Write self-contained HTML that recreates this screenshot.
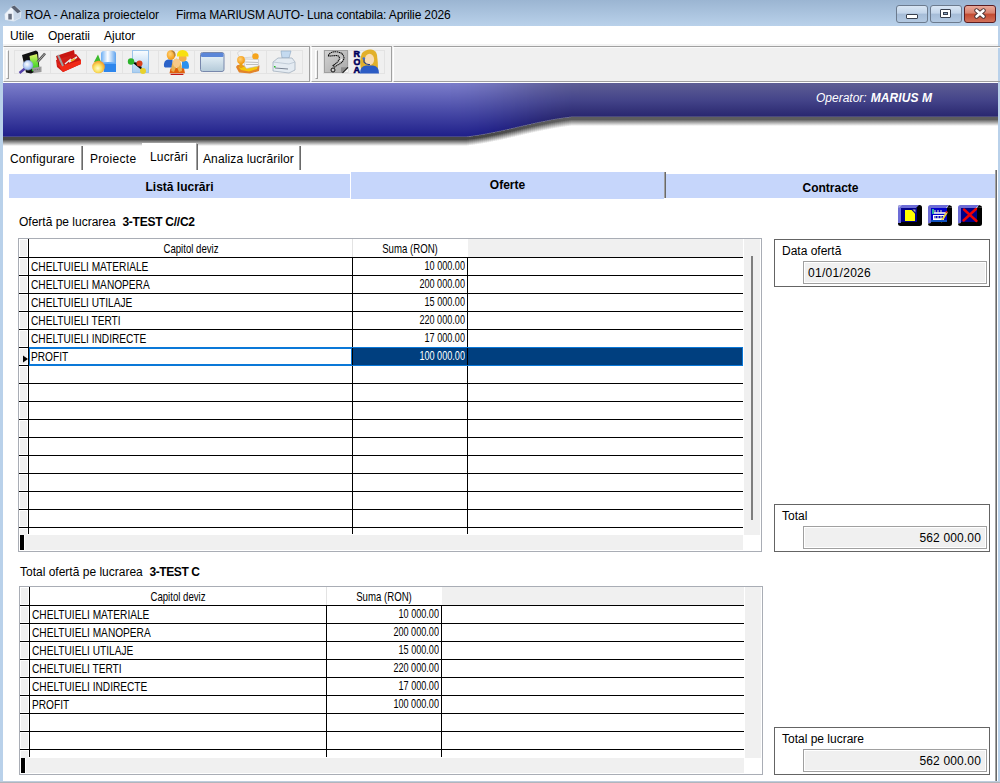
<!DOCTYPE html>
<html><head><meta charset="utf-8">
<style>
*{margin:0;padding:0;box-sizing:border-box}
html,body{width:1000px;height:783px;overflow:hidden;background:#fff;font-family:"Liberation Sans",sans-serif;color:#000}
.a{position:absolute}
.t{position:absolute;white-space:nowrap;line-height:1}
.wbtn{position:absolute;top:5px;height:18px;border:1px solid #6c7b8e;border-radius:3px;background:linear-gradient(#d9e6f4 0%,#c3d5ea 45%,#a5bcd7 50%,#b3c9e2 100%)}
.wbtn.cl{border-color:#5b1e22;background:linear-gradient(#e9a99a 0%,#d8826e 45%,#c24a30 50%,#d2715a 100%)}
.grp{position:absolute;top:46px;height:36px;border-top:1px solid #a0a0a0;border-bottom:1px solid #a0a0a0;border-left:1px solid #fff;border-right:1px solid #a0a0a0;box-shadow:inset 0 1px 0 #fafafa}
.grip{position:absolute;width:3px;border-left:1px solid #fff;border-top:1px solid #fff;border-right:1px solid #a0a0a0;border-bottom:1px solid #a0a0a0}
.cell{position:absolute;top:50px;height:24px;border:1px solid #e3e3e3}
.tab{position:absolute;font-size:12px}
.sep{position:absolute;width:2px;border-left:1px solid #a0a0a0;border-right:1px solid #696969}
.st{position:absolute;background:#c6d6fb;font-weight:bold;font-size:12px;text-align:center}
.g{font-size:13px;transform-origin:0 0}
.gs{}
.box{position:absolute;border:1px solid #646464}
.fld{position:absolute;border:1px solid #a0a0a0;background:#f0f0f0;box-shadow:inset 1px 1px 0 #fff, inset -1px -1px 0 #fff}
</style></head><body>
<div class="a" style="left:0;top:0;width:1000px;height:26px;background:linear-gradient(#9bb5d2,#b9d1ea)"></div>
<div class="a" style="left:0;top:26px;width:3px;height:757px;background:#b9d1ea"></div>
<div class="a" style="left:998px;top:26px;width:2px;height:757px;background:#b9d1ea"></div>
<div class="a" style="left:0;top:781px;width:1000px;height:2px;background:linear-gradient(#c5d9f0,#a9a9a9)"></div>
<div class="wbtn" style="left:896px;width:32px"></div>
<div class="wbtn" style="left:930px;width:32px"></div>
<div class="wbtn cl" style="left:964px;width:32px"></div>
<div class="a" style="left:906px;top:14px;width:12px;height:5px;border:1px solid #38404e;border-radius:1px;background:#fff"></div>
<div class="a" style="left:940px;top:9px;width:11px;height:9px;border:1px solid #38404e;border-radius:1px;background:#fff"><div class="a" style="left:2px;top:2px;width:5px;height:3px;background:#8fa8c6;border:1px solid #38404e"></div></div>
<svg class="a" style="left:972px;top:8px" width="16" height="12" viewBox="0 0 16 12"><path d="M4.5 2.5 L11.5 8.5 M11.5 2.5 L4.5 8.5" stroke="#4a3434" stroke-width="4.4" stroke-linecap="round"/><path d="M4.5 2.5 L11.5 8.5 M11.5 2.5 L4.5 8.5" stroke="#fff" stroke-width="2.6" stroke-linecap="round"/></svg>
<svg class="a" style="left:4px;top:5px" width="18" height="17" viewBox="0 0 18 17"><path d="M0.5 9 L7.5 1.5 L10.5 0 L17.5 6.5 L16.8 13 L10 16.5 L1 15Z" fill="#fff" opacity=".55"/><path d="M1 9.5 L7.5 2.5 L9.5 4.5 L9.5 15.5 L1.5 14.5Z" fill="#eef3fa"/><rect x="4.3" y="8.8" width="3.5" height="5.7" fill="#687080"/><path d="M9.5 4.5 L13.5 8 L16 7 L16 12.5 L10 15.5Z" fill="#c9d7e8"/><path d="M7 2 L10.5 0.5 L16.8 6.5 L13.5 8.3Z" fill="#5a6272"/></svg>
<div class="t" style="left:25px;top:9px;font-size:12px">ROA - Analiza proiectelor</div>
<div class="t" style="left:176px;top:9px;font-size:12px;letter-spacing:-0.14px">Firma MARIUSM AUTO- Luna contabila: Aprilie 2026</div>
<div class="a" style="left:3px;top:26px;width:995px;height:20px;background:linear-gradient(#fff 18px,#f3f3f3 18px)"></div>
<div class="t" style="left:10px;top:30px;font-size:12px">Utile</div>
<div class="t" style="left:48px;top:30px;font-size:12px">Operatii</div>
<div class="t" style="left:104px;top:30px;font-size:12px">Ajutor</div>
<div class="a" style="left:3px;top:46px;width:995px;height:36px;background:#f0f0f0"></div>
<div class="grp" style="left:3px;width:307px"></div>
<div class="grp" style="left:311px;width:81px"></div>
<div class="grp" style="left:393px;width:610px"></div>
<div class="grip" style="left:6px;top:50px;height:29px"></div>
<div class="grip" style="left:315px;top:50px;height:29px"></div>
<div class="cell" style="left:14px;width:37px"></div>
<div class="cell" style="left:50px;width:37px"></div>
<div class="cell" style="left:86px;width:37px"></div>
<div class="cell" style="left:122px;width:37px"></div>
<div class="cell" style="left:158px;width:37px"></div>
<div class="cell" style="left:194px;width:37px"></div>
<div class="cell" style="left:230px;width:37px"></div>
<div class="cell" style="left:266px;width:37px"></div>
<div class="cell" style="left:323px;width:37px"></div>
<div class="cell" style="left:348px;width:37px"></div>
<svg class="a" style="left:0;top:46px" width="400" height="36" viewBox="0 46 400 36">
<defs>
<linearGradient id="ig1" x1="0" y1="0" x2="0" y2="1"><stop offset="0" stop-color="#e4f56a"/><stop offset=".5" stop-color="#6fe03a"/><stop offset="1" stop-color="#22c41a"/></linearGradient>
<radialGradient id="ig2" cx=".4" cy=".4" r=".6"><stop offset="0" stop-color="#fff"/><stop offset="1" stop-color="#8fb4f0"/></radialGradient>
<linearGradient id="ig3" x1="0" y1="0" x2="1" y2="1"><stop offset="0" stop-color="#e0241c"/><stop offset="1" stop-color="#b00c0c"/></linearGradient>
<linearGradient id="ig4" x1="0" y1="0" x2="1" y2="0"><stop offset="0" stop-color="#6aaef5"/><stop offset=".45" stop-color="#ffffff"/><stop offset="1" stop-color="#5da2ee"/></linearGradient>
<radialGradient id="ig5" cx=".45" cy=".6" r=".55"><stop offset="0" stop-color="#fffbd0"/><stop offset=".55" stop-color="#f8e060"/><stop offset="1" stop-color="#f5a030"/></radialGradient>
<linearGradient id="ig6" x1="0" y1="0" x2="0" y2="1"><stop offset="0" stop-color="#fafdff"/><stop offset="1" stop-color="#a8cdf0"/></linearGradient>
<linearGradient id="ig7" x1="0" y1="0" x2="0" y2="1"><stop offset="0" stop-color="#eef7fc"/><stop offset="1" stop-color="#b4cad9"/></linearGradient>
<radialGradient id="ig8" cx=".4" cy=".4" r=".6"><stop offset="0" stop-color="#ffd27a"/><stop offset="1" stop-color="#f59a10"/></radialGradient>
<linearGradient id="ig9" x1="0" y1="0" x2="1" y2="1"><stop offset="0" stop-color="#d4d4d4"/><stop offset="1" stop-color="#a8a8a8"/></linearGradient>
<linearGradient id="ig10" x1="0" y1="0" x2="0" y2="1"><stop offset="0" stop-color="#f4c860"/><stop offset="1" stop-color="#c88a18"/></linearGradient>
</defs>
<!-- icon1 -->
<path d="M22 55 L36 50.5 L38 52 L39.5 70 L31 73.5 L26 72.5Z" fill="#111"/>
<path d="M29.5 56 L37 54 L39 69 L32 71.5Z" fill="url(#ig1)"/>
<path d="M32 68 L41.5 66.5 L41.5 72 L34 73Z" fill="#9c9c9c"/>
<path d="M33.5 70 L40.5 69" stroke="#6a6a6a" stroke-width=".8" stroke-dasharray="1 .8"/>
<path d="M37.5 62 L45 53.5" stroke="#505050" stroke-width="2.6"/>
<path d="M37.5 62 L45 53.5" stroke="#a8a8a8" stroke-width="1"/>
<path d="M25.5 68 L19.5 73" stroke="#5440a8" stroke-width="2.4"/>
<circle cx="28" cy="65.2" r="4.8" fill="url(#ig2)" stroke="#90a8d8" stroke-width=".8"/>
<!-- icon2 toolbox -->
<path d="M56 56 L74 50 L75 56 L58 63Z" fill="#c81410"/>
<path d="M56 60 L76 54 L81 60 L81 64 L63 72 L57 67Z" fill="url(#ig3)"/>
<path d="M57 63 L63 72 L81 64 L81 60 L62 66Z" fill="#f02a18"/>
<path d="M58 55 L63 66" stroke="#a0a0a0" stroke-width="2"/>
<path d="M65 64 L71 59 M69 62 L77 57" stroke="#e8e8e8" stroke-width="1.5"/>
<path d="M71 61 L75 59" stroke="#f0b020" stroke-width="1.8"/>
<!-- icon3 shapes -->
<rect x="101" y="51" width="15" height="21" rx="3" fill="url(#ig4)"/>
<rect x="104" y="63" width="12" height="9" fill="#2e86ec"/>
<path d="M101 63 Q108 61 116 63 L116 64 L101 64Z" fill="#5ea8f8"/>
<path d="M94 62 L98 54.5 L101 62Z" fill="#3cba2c"/>
<circle cx="98.5" cy="67" r="6.3" fill="url(#ig5)"/>
<!-- icon4 molecule doc -->
<rect x="132.5" y="50.5" width="16" height="22" fill="url(#ig6)" stroke="#9cc4ea" stroke-width="1"/>
<path d="M131 61.5 L139.5 63.5 L143 71" stroke="#505050" stroke-width="1"/>
<circle cx="131" cy="61.5" r="3.2" fill="#2cb42c"/>
<circle cx="139.5" cy="63.6" r="3" fill="#d8401c"/>
<circle cx="143" cy="71" r="3" fill="#e8d22c"/>
<!-- icon5 people -->
<path d="M164 66.5 Q163.5 60 168 59.5 L172.5 59.5 L172.5 67.5 L165 67.5Z" fill="#2a62c8"/>
<path d="M182 61 L186.5 61 Q189 62 189 67 L188.5 68.8 L182 68.8Z" fill="#2a90ee"/>
<ellipse cx="171" cy="55" rx="4.3" ry="4.8" fill="url(#ig8)"/>
<path d="M172 50.5 Q176 51 175.5 56 L174.5 57 Q174 52 171 51Z" fill="#b08040"/>
<ellipse cx="182.7" cy="58" rx="3.9" ry="3.8" fill="#f4b048"/>
<path d="M177 56.5 Q176.5 50 182.5 50 Q188.5 50 188.5 56.5Z" fill="#f8e010"/>
<path d="M169.5 73.2 L170.5 68.5 Q176 67 184 68.5 L185 73.2Z" fill="#e0600c"/>
<path d="M171.3 71 Q171 60 176.5 58.5 Q182 60 182 71 L179 72 L176.5 66 L174 72Z" fill="#e8b050"/>
<ellipse cx="176.6" cy="63" rx="3.6" ry="4.2" fill="#f8c888"/>
<path d="M170.6 74.4 L183.4 74.4" stroke="#c01818" stroke-width="1.2"/>
<!-- icon6 window -->
<rect x="200.5" y="52.5" width="23.5" height="19" rx="2" fill="url(#ig7)" stroke="#7888ac" stroke-width="1"/>
<rect x="201" y="53" width="22.5" height="4" rx="1" fill="#5b86d8"/>
<!-- icon7 papers -->
<path d="M237.5 53 Q239 50 245 50.5 Q251 49.5 252.5 52 L253 57 L241 58 Q238 56 237.5 53Z" fill="#f2f2f2" stroke="#c8c8c8" stroke-width=".6"/>
<circle cx="255.5" cy="56.5" r="3.2" fill="#f6a41c"/>
<path d="M236 67 Q237 64 241 65 L247 66 L259.5 65.5 L259 71 L250 73.5 L239 72.5Z" fill="#e2842a"/>
<path d="M238.5 67 L247 66.5 L258 65.5 L257 69 L249 71.5 L241 70Z" fill="#f6c80a"/>
<path d="M245 59 L258.5 59.5 L258.5 66 L246.5 68.5 L244.5 66Z" fill="#f6f6f6" stroke="#bcbcbc" stroke-width=".6"/>
<path d="M245.5 62 L258 62.5 M246 64.5 L258 64.5" stroke="#a8a8a8" stroke-width=".7"/>
<rect x="239.5" y="63" width="3" height="5" fill="#e8a010"/>
<circle cx="241" cy="60" r="3.9" fill="url(#ig8)"/>
<!-- icon8 printer -->
<path d="M281 51 L291 51 L289 58 L282 58Z" fill="#c4daf0" stroke="#8aa4c0" stroke-width=".6"/>
<path d="M273 62 L278 58 L292 58 L295 62 L295 70 L289 73 L273 71Z" fill="#e4ebf2" stroke="#9aa8b8" stroke-width=".7"/>
<path d="M273 62 L289 64 L295 62" stroke="#b8c4d0" stroke-width=".8" fill="none"/>
<path d="M275 68 L288 69" stroke="#7a8494" stroke-width="1"/>
<rect x="274" y="66" width="1.5" height="1.5" fill="#20c020"/>
<!-- help icon -->
<rect x="324" y="50" width="24" height="23" fill="url(#ig9)"/>
<rect x="324.5" y="50.5" width="23" height="22" fill="none" stroke="#a0a0a0" stroke-width="1"/>
<path d="M328.5 55.5 Q329.5 51.5 336.5 51.8 Q343.5 52.5 344 58 Q343.5 62 338.5 64.5 L334.5 67 L333 65.5 Q338.5 62 339.5 58.5 Q339.5 55.5 336 55.5 Q331.5 56 328.5 56Z" fill="#c4c4c4" stroke="#0a0a0a" stroke-width="1.1" stroke-dasharray="1.4 .5"/>
<path d="M340.5 61 L342 59" stroke="#fff" stroke-width="1.2"/>
<circle cx="333" cy="70" r="2" fill="#cfcfcf" stroke="#111" stroke-width="1"/>
<path d="M341 67.3 L348 67.3 L348 72.8 L341 72.8Z" fill="#8c8c8c"/>
<path d="M343 72.8 L348 67.8 L348 72.8Z" fill="#f4f4f4"/>
<path d="M342.5 72.8 L348 67.3" stroke="#1a1a1a" stroke-width="1.1"/>
<!-- ROA icon -->
<text x="353.6" y="57.3" font-family="Liberation Sans" font-weight="bold" font-size="9" fill="#00005c" stroke="#00005c" stroke-width=".6">R</text>
<text x="353.4" y="65.3" font-family="Liberation Sans" font-weight="bold" font-size="9" fill="#00005c" stroke="#00005c" stroke-width=".6">O</text>
<text x="353.6" y="73.3" font-family="Liberation Sans" font-weight="bold" font-size="9" fill="#00005c" stroke="#00005c" stroke-width=".6">A</text>
<path d="M361 70 Q359 60 362 53 Q366 49 371 49.5 Q376 50 377 55 Q378 62 378 69Z" fill="#e2b02a"/>
<ellipse cx="369.5" cy="59.5" rx="4.6" ry="5.8" fill="#f8dcb4"/>
<path d="M360 73.5 Q360 66 366 65.5 L373 65.5 Q379 66 379 73.5Z" fill="#2c5cc4"/>
<path d="M364 58 L364 62 Q366 65 370 64.5" stroke="#203c90" stroke-width="1.2" fill="none"/>
<circle cx="363.8" cy="58.5" r="1.3" fill="#3c70d8"/>
</svg>

<div class="a" style="left:3px;top:82px;width:995px;height:1px;background:#fff"></div>
<div class="a" style="left:3px;top:83px;width:995px;height:64px;overflow:hidden">
<i style="position:absolute;left:0px;top:0;width:8px;height:64px;background:linear-gradient(#7c7ecb,#4c4eaa 26.5px,#20208a 53.0px,#6c6c8c 54.0px,#474747 54.5px,#474747 56.5px,#fff 63.0px)"></i>
<i style="position:absolute;left:8px;top:0;width:8px;height:64px;background:linear-gradient(#7c7ecb,#4c4eaa 26.5px,#20208a 53.0px,#6c6c8c 54.0px,#474747 54.5px,#474747 56.5px,#fff 63.0px)"></i>
<i style="position:absolute;left:16px;top:0;width:8px;height:64px;background:linear-gradient(#7c7ecb,#4c4eaa 26.5px,#20208a 53.0px,#6c6c8c 54.0px,#474747 54.5px,#474747 56.5px,#fff 63.0px)"></i>
<i style="position:absolute;left:24px;top:0;width:8px;height:64px;background:linear-gradient(#7c7ecb,#4c4eaa 26.5px,#20208a 53.0px,#6c6c8c 54.0px,#474747 54.5px,#474747 56.5px,#fff 63.0px)"></i>
<i style="position:absolute;left:32px;top:0;width:8px;height:64px;background:linear-gradient(#7c7ecb,#4c4eaa 26.5px,#20208a 53.0px,#6c6c8c 54.0px,#474747 54.5px,#474747 56.5px,#fff 63.0px)"></i>
<i style="position:absolute;left:40px;top:0;width:8px;height:64px;background:linear-gradient(#7c7ecb,#4c4eaa 26.5px,#20208a 53.0px,#6c6c8c 54.0px,#474747 54.5px,#474747 56.5px,#fff 63.0px)"></i>
<i style="position:absolute;left:48px;top:0;width:8px;height:64px;background:linear-gradient(#7c7ecb,#4c4eaa 26.5px,#20208a 53.0px,#6c6c8c 54.0px,#474747 54.5px,#474747 56.5px,#fff 63.0px)"></i>
<i style="position:absolute;left:56px;top:0;width:8px;height:64px;background:linear-gradient(#7c7ecb,#4c4eaa 26.5px,#20208a 53.0px,#6c6c8c 54.0px,#474747 54.5px,#474747 56.5px,#fff 63.0px)"></i>
<i style="position:absolute;left:64px;top:0;width:8px;height:64px;background:linear-gradient(#7c7ecb,#4c4eaa 26.5px,#20208a 53.0px,#6c6c8c 54.0px,#474747 54.5px,#474747 56.5px,#fff 63.0px)"></i>
<i style="position:absolute;left:72px;top:0;width:8px;height:64px;background:linear-gradient(#7c7ecb,#4c4eaa 26.5px,#20208a 53.0px,#6c6c8c 54.0px,#474747 54.5px,#474747 56.5px,#fff 63.0px)"></i>
<i style="position:absolute;left:80px;top:0;width:8px;height:64px;background:linear-gradient(#7c7ecb,#4c4eaa 26.5px,#20208a 53.0px,#6c6c8c 54.0px,#474747 54.5px,#474747 56.5px,#fff 63.0px)"></i>
<i style="position:absolute;left:88px;top:0;width:8px;height:64px;background:linear-gradient(#7c7ecb,#4c4eaa 26.5px,#20208a 53.0px,#6c6c8c 54.0px,#474747 54.5px,#474747 56.5px,#fff 63.0px)"></i>
<i style="position:absolute;left:96px;top:0;width:8px;height:64px;background:linear-gradient(#7c7ecb,#4c4eaa 26.5px,#20208a 53.0px,#6c6c8c 54.0px,#474747 54.5px,#474747 56.5px,#fff 63.0px)"></i>
<i style="position:absolute;left:104px;top:0;width:8px;height:64px;background:linear-gradient(#7c7ecb,#4c4eaa 26.5px,#20208a 53.0px,#6c6c8c 54.0px,#474747 54.5px,#474747 56.5px,#fff 63.0px)"></i>
<i style="position:absolute;left:112px;top:0;width:8px;height:64px;background:linear-gradient(#7c7ecb,#4c4eaa 26.5px,#20208a 53.0px,#6c6c8c 54.0px,#474747 54.5px,#474747 56.5px,#fff 63.0px)"></i>
<i style="position:absolute;left:120px;top:0;width:8px;height:64px;background:linear-gradient(#7c7ecb,#4c4eaa 26.5px,#20208a 53.0px,#6c6c8c 54.0px,#474747 54.5px,#474747 56.5px,#fff 63.0px)"></i>
<i style="position:absolute;left:128px;top:0;width:8px;height:64px;background:linear-gradient(#7c7ecb,#4c4eaa 26.5px,#20208a 53.0px,#6c6c8c 54.0px,#474747 54.5px,#474747 56.5px,#fff 63.0px)"></i>
<i style="position:absolute;left:136px;top:0;width:8px;height:64px;background:linear-gradient(#7c7ecb,#4c4eaa 26.5px,#20208a 53.0px,#6c6c8c 54.0px,#474747 54.5px,#474747 56.5px,#fff 63.0px)"></i>
<i style="position:absolute;left:144px;top:0;width:8px;height:64px;background:linear-gradient(#7c7ecb,#4c4eaa 26.5px,#20208a 53.0px,#6c6c8c 54.0px,#474747 54.5px,#474747 56.5px,#fff 63.0px)"></i>
<i style="position:absolute;left:152px;top:0;width:8px;height:64px;background:linear-gradient(#7c7ecb,#4c4eaa 26.5px,#20208a 53.0px,#6c6c8c 54.0px,#474747 54.5px,#474747 56.5px,#fff 63.0px)"></i>
<i style="position:absolute;left:160px;top:0;width:8px;height:64px;background:linear-gradient(#7c7ecb,#4c4eaa 26.5px,#20208a 53.0px,#6c6c8c 54.0px,#474747 54.5px,#474747 56.5px,#fff 63.0px)"></i>
<i style="position:absolute;left:168px;top:0;width:8px;height:64px;background:linear-gradient(#7c7ecb,#4c4eaa 26.5px,#20208a 53.0px,#6c6c8c 54.0px,#474747 54.5px,#474747 56.5px,#fff 63.0px)"></i>
<i style="position:absolute;left:176px;top:0;width:8px;height:64px;background:linear-gradient(#7c7ecb,#4c4eaa 26.5px,#20208a 53.0px,#6c6c8c 54.0px,#474747 54.5px,#474747 56.5px,#fff 63.0px)"></i>
<i style="position:absolute;left:184px;top:0;width:8px;height:64px;background:linear-gradient(#7c7ecb,#4c4eaa 26.5px,#20208a 53.0px,#6c6c8c 54.0px,#474747 54.5px,#474747 56.5px,#fff 63.0px)"></i>
<i style="position:absolute;left:192px;top:0;width:8px;height:64px;background:linear-gradient(#7c7ecb,#4c4eaa 26.5px,#20208a 53.0px,#6c6c8c 54.0px,#474747 54.5px,#474747 56.5px,#fff 63.0px)"></i>
<i style="position:absolute;left:200px;top:0;width:8px;height:64px;background:linear-gradient(#7c7ecb,#4c4eaa 26.5px,#20208a 53.0px,#6c6c8c 54.0px,#474747 54.5px,#474747 56.5px,#fff 63.0px)"></i>
<i style="position:absolute;left:208px;top:0;width:8px;height:64px;background:linear-gradient(#7c7ecb,#4c4eaa 26.5px,#20208a 53.0px,#6c6c8c 54.0px,#474747 54.5px,#474747 56.5px,#fff 63.0px)"></i>
<i style="position:absolute;left:216px;top:0;width:8px;height:64px;background:linear-gradient(#7c7ecb,#4c4eaa 26.5px,#20208a 53.0px,#6c6c8c 54.0px,#474747 54.5px,#474747 56.5px,#fff 63.0px)"></i>
<i style="position:absolute;left:224px;top:0;width:8px;height:64px;background:linear-gradient(#7c7ecb,#4c4eaa 26.5px,#20208a 53.0px,#6c6c8c 54.0px,#474747 54.5px,#474747 56.5px,#fff 63.0px)"></i>
<i style="position:absolute;left:232px;top:0;width:8px;height:64px;background:linear-gradient(#7c7ecb,#4c4eaa 26.5px,#20208a 53.0px,#6c6c8c 54.0px,#474747 54.5px,#474747 56.5px,#fff 63.0px)"></i>
<i style="position:absolute;left:240px;top:0;width:8px;height:64px;background:linear-gradient(#7c7ecb,#4c4eaa 26.5px,#20208a 53.0px,#6c6c8c 54.0px,#474747 54.5px,#474747 56.5px,#fff 63.0px)"></i>
<i style="position:absolute;left:248px;top:0;width:8px;height:64px;background:linear-gradient(#7c7ecb,#4c4eaa 26.5px,#20208a 53.0px,#6c6c8c 54.0px,#474747 54.5px,#474747 56.5px,#fff 63.0px)"></i>
<i style="position:absolute;left:256px;top:0;width:8px;height:64px;background:linear-gradient(#7c7ecb,#4c4eaa 26.5px,#20208a 53.0px,#6c6c8c 54.0px,#474747 54.5px,#474747 56.5px,#fff 63.0px)"></i>
<i style="position:absolute;left:264px;top:0;width:8px;height:64px;background:linear-gradient(#7c7ecb,#4c4eaa 26.5px,#20208a 53.0px,#6c6c8c 54.0px,#474747 54.5px,#474747 56.5px,#fff 63.0px)"></i>
<i style="position:absolute;left:272px;top:0;width:8px;height:64px;background:linear-gradient(#7c7ecb,#4c4eaa 26.5px,#20208a 53.0px,#6c6c8c 54.0px,#474747 54.5px,#474747 56.5px,#fff 63.0px)"></i>
<i style="position:absolute;left:280px;top:0;width:8px;height:64px;background:linear-gradient(#7c7ecb,#4c4eaa 26.5px,#20208a 53.0px,#6c6c8c 54.0px,#474747 54.5px,#474747 56.5px,#fff 63.0px)"></i>
<i style="position:absolute;left:288px;top:0;width:8px;height:64px;background:linear-gradient(#7c7ecb,#4c4eaa 26.5px,#20208a 53.0px,#6c6c8c 54.0px,#474747 54.5px,#474747 56.5px,#fff 63.0px)"></i>
<i style="position:absolute;left:296px;top:0;width:8px;height:64px;background:linear-gradient(#7c7ecb,#4c4eaa 26.5px,#20208a 53.0px,#6c6c8c 54.0px,#474747 54.5px,#474747 56.5px,#fff 63.0px)"></i>
<i style="position:absolute;left:304px;top:0;width:8px;height:64px;background:linear-gradient(#7c7ecb,#4c4eaa 26.5px,#20208a 53.0px,#6c6c8c 54.0px,#474747 54.5px,#474747 56.5px,#fff 63.0px)"></i>
<i style="position:absolute;left:312px;top:0;width:8px;height:64px;background:linear-gradient(#7c7ecb,#4c4eaa 26.5px,#20208a 53.0px,#6c6c8c 54.0px,#474747 54.5px,#474747 56.5px,#fff 63.0px)"></i>
<i style="position:absolute;left:320px;top:0;width:8px;height:64px;background:linear-gradient(#7c7ecb,#4c4eaa 26.5px,#20208a 53.0px,#6c6c8c 54.0px,#474747 54.5px,#474747 56.5px,#fff 63.0px)"></i>
<i style="position:absolute;left:328px;top:0;width:8px;height:64px;background:linear-gradient(#7c7ecb,#4c4eaa 26.5px,#20208a 53.0px,#6c6c8c 54.0px,#474747 54.5px,#474747 56.5px,#fff 63.0px)"></i>
<i style="position:absolute;left:336px;top:0;width:8px;height:64px;background:linear-gradient(#7c7ecb,#4c4eaa 26.5px,#20208a 53.0px,#6c6c8c 54.0px,#474747 54.5px,#474747 56.5px,#fff 63.0px)"></i>
<i style="position:absolute;left:344px;top:0;width:8px;height:64px;background:linear-gradient(#7c7ecb,#4c4eaa 26.5px,#20208a 53.0px,#6c6c8c 54.0px,#474747 54.5px,#474747 56.5px,#fff 63.0px)"></i>
<i style="position:absolute;left:352px;top:0;width:8px;height:64px;background:linear-gradient(#7c7ecb,#4c4eaa 26.5px,#20208a 53.0px,#6c6c8c 54.0px,#474747 54.5px,#474747 56.5px,#fff 63.0px)"></i>
<i style="position:absolute;left:360px;top:0;width:8px;height:64px;background:linear-gradient(#7c7ecb,#4c4eaa 26.5px,#20208a 53.0px,#6c6c8c 54.0px,#474747 54.5px,#474747 56.5px,#fff 63.0px)"></i>
<i style="position:absolute;left:368px;top:0;width:8px;height:64px;background:linear-gradient(#7c7ecb,#4c4eaa 26.5px,#20208a 53.0px,#6c6c8c 54.0px,#474747 54.5px,#474747 56.5px,#fff 63.0px)"></i>
<i style="position:absolute;left:376px;top:0;width:8px;height:64px;background:linear-gradient(#7c7ecb,#4c4eaa 26.5px,#20208a 53.0px,#6c6c8c 54.0px,#474747 54.5px,#474747 56.5px,#fff 63.0px)"></i>
<i style="position:absolute;left:384px;top:0;width:8px;height:64px;background:linear-gradient(#7c7ecb,#4c4eaa 26.5px,#20208a 53.0px,#6c6c8c 54.0px,#474747 54.5px,#474747 56.5px,#fff 63.0px)"></i>
<i style="position:absolute;left:392px;top:0;width:8px;height:64px;background:linear-gradient(#7c7ecb,#4c4eaa 26.5px,#20208a 53.0px,#6c6c8c 54.0px,#474747 54.5px,#474747 56.5px,#fff 63.0px)"></i>
<i style="position:absolute;left:400px;top:0;width:8px;height:64px;background:linear-gradient(#7c7ecb,#4c4eaa 26.5px,#20208a 53.0px,#6c6c8c 54.0px,#474747 54.5px,#474747 56.5px,#fff 63.0px)"></i>
<i style="position:absolute;left:408px;top:0;width:8px;height:64px;background:linear-gradient(#7c7ecb,#4c4eaa 26.5px,#20208a 53.0px,#6c6c8c 54.0px,#474747 54.5px,#474747 56.5px,#fff 63.0px)"></i>
<i style="position:absolute;left:416px;top:0;width:8px;height:64px;background:linear-gradient(#7c7ecb,#4c4eaa 26.5px,#20208a 53.0px,#6c6c8c 54.0px,#474747 54.5px,#474747 56.5px,#fff 63.0px)"></i>
<i style="position:absolute;left:424px;top:0;width:8px;height:64px;background:linear-gradient(#7c7ecb,#4c4eaa 26.5px,#20208a 53.0px,#6c6c8c 54.0px,#474747 54.5px,#474747 56.5px,#fff 63.0px)"></i>
<i style="position:absolute;left:432px;top:0;width:8px;height:64px;background:linear-gradient(#7c7ecb,#4c4eaa 26.5px,#20208a 53.0px,#6c6c8c 54.0px,#474747 54.5px,#474747 56.5px,#fff 63.0px)"></i>
<i style="position:absolute;left:440px;top:0;width:8px;height:64px;background:linear-gradient(#7c7ecb,#4c4eaa 26.5px,#20208a 53.0px,#6c6c8c 54.0px,#474747 54.5px,#474747 56.5px,#fff 63.0px)"></i>
<i style="position:absolute;left:448px;top:0;width:8px;height:64px;background:linear-gradient(#7b7dc9,#4c4ea9 26.5px,#20208a 53.0px,#6c6c8c 54.0px,#474747 54.5px,#474747 56.5px,#fff 63.0px)"></i>
<i style="position:absolute;left:456px;top:0;width:2px;height:64px;background:linear-gradient(#7b7cc8,#4c4ea8 26.5px,#20208a 53.0px,#6c6c8c 54.0px,#474747 54.5px,#474747 56.5px,#fff 63.0px)"></i>
<i style="position:absolute;left:458px;top:0;width:2px;height:64px;background:linear-gradient(#7a7cc8,#4c4da8 26.5px,#20208a 53.0px,#6c6c8c 54.0px,#474747 54.5px,#474747 56.5px,#fff 63.0px)"></i>
<i style="position:absolute;left:460px;top:0;width:2px;height:64px;background:linear-gradient(#7a7cc7,#4c4da8 26.5px,#20208a 53.0px,#6c6c8c 54.0px,#474747 54.5px,#474747 56.5px,#fff 63.0px)"></i>
<i style="position:absolute;left:462px;top:0;width:2px;height:64px;background:linear-gradient(#7a7bc7,#4b4da7 26.5px,#20208a 53.0px,#6c6c8c 54.0px,#474747 54.5px,#474747 56.5px,#fff 63.0px)"></i>
<i style="position:absolute;left:464px;top:0;width:2px;height:64px;background:linear-gradient(#797bc6,#4b4da7 26.4px,#20208a 52.8px,#6c6c8c 53.8px,#474747 54.3px,#474747 56.3px,#fff 62.8px)"></i>
<i style="position:absolute;left:466px;top:0;width:2px;height:64px;background:linear-gradient(#797bc5,#4b4da7 26.3px,#20208a 52.5px,#6c6c8c 53.5px,#474747 54.0px,#474747 56.0px,#fff 62.5px)"></i>
<i style="position:absolute;left:468px;top:0;width:2px;height:64px;background:linear-gradient(#787ac5,#4b4da6 26.1px,#20208a 52.3px,#6c6c8c 53.3px,#474747 53.8px,#474747 55.8px,#fff 62.3px)"></i>
<i style="position:absolute;left:470px;top:0;width:2px;height:64px;background:linear-gradient(#787ac4,#4b4da6 26.0px,#20208a 52.0px,#6c6c8c 53.0px,#474747 53.5px,#474747 55.5px,#fff 62.0px)"></i>
<i style="position:absolute;left:472px;top:0;width:2px;height:64px;background:linear-gradient(#7879c3,#4b4da5 25.9px,#20208a 51.7px,#6c6c8c 52.7px,#474747 53.2px,#474747 55.2px,#fff 61.7px)"></i>
<i style="position:absolute;left:474px;top:0;width:2px;height:64px;background:linear-gradient(#7779c2,#4b4da5 25.7px,#20208a 51.4px,#6c6c8c 52.4px,#474747 52.9px,#474747 54.9px,#fff 61.4px)"></i>
<i style="position:absolute;left:476px;top:0;width:2px;height:64px;background:linear-gradient(#7778c1,#4b4ca4 25.6px,#202089 51.1px,#6c6c8c 52.1px,#484848 52.6px,#484848 54.6px,#fff 61.1px)"></i>
<i style="position:absolute;left:478px;top:0;width:2px;height:64px;background:linear-gradient(#7678c0,#4b4ca4 25.4px,#202089 50.8px,#6c6c8c 51.8px,#484848 52.3px,#484848 54.3px,#fff 60.8px)"></i>
<i style="position:absolute;left:480px;top:0;width:2px;height:64px;background:linear-gradient(#7677c0,#4b4ca3 25.2px,#212089 50.4px,#6c6c8c 51.4px,#484848 51.9px,#484848 53.9px,#fff 60.4px)"></i>
<i style="position:absolute;left:482px;top:0;width:2px;height:64px;background:linear-gradient(#7577bf,#4a4ca3 25.0px,#212188 50.1px,#6c6c8c 51.1px,#494949 51.6px,#494949 53.6px,#fff 60.1px)"></i>
<i style="position:absolute;left:484px;top:0;width:2px;height:64px;background:linear-gradient(#7576be,#4a4ca2 24.9px,#212188 49.7px,#6c6c8c 50.7px,#494949 51.2px,#494949 53.2px,#fff 59.7px)"></i>
<i style="position:absolute;left:486px;top:0;width:2px;height:64px;background:linear-gradient(#7476bd,#4a4ca2 24.7px,#212187 49.3px,#6c6c8c 50.3px,#494949 50.8px,#494949 52.8px,#fff 59.3px)"></i>
<i style="position:absolute;left:488px;top:0;width:2px;height:64px;background:linear-gradient(#7475bc,#4a4ca1 24.5px,#212187 48.9px,#6c6c8c 49.9px,#4a4a4a 50.4px,#4a4a4a 52.4px,#fff 58.9px)"></i>
<i style="position:absolute;left:490px;top:0;width:2px;height:64px;background:linear-gradient(#7375bb,#4a4ba1 24.3px,#212186 48.5px,#6c6c8c 49.5px,#4a4a4a 50.0px,#4a4a4a 52.0px,#fff 58.5px)"></i>
<i style="position:absolute;left:492px;top:0;width:2px;height:64px;background:linear-gradient(#7374ba,#4a4ba0 24.1px,#222186 48.1px,#6c6c8c 49.1px,#4b4b4b 49.6px,#4b4b4b 51.6px,#fff 58.1px)"></i>
<i style="position:absolute;left:494px;top:0;width:2px;height:64px;background:linear-gradient(#7273b9,#4a4b9f 23.9px,#222285 47.7px,#6c6c8c 48.7px,#4b4b4b 49.2px,#4b4b4b 51.2px,#fff 57.7px)"></i>
<i style="position:absolute;left:496px;top:0;width:2px;height:64px;background:linear-gradient(#7173b8,#4a4b9f 23.6px,#222284 47.3px,#6c6c8c 48.3px,#4c4c4c 48.8px,#4c4c4c 50.8px,#fff 57.3px)"></i>
<i style="position:absolute;left:498px;top:0;width:2px;height:64px;background:linear-gradient(#7172b7,#494b9e 23.4px,#222284 46.9px,#6c6c8c 47.9px,#4d4d4d 48.4px,#4d4d4d 50.4px,#fff 56.9px)"></i>
<i style="position:absolute;left:500px;top:0;width:2px;height:64px;background:linear-gradient(#7071b6,#494a9d 23.2px,#232283 46.4px,#6c6c8c 47.4px,#4d4d4d 47.9px,#4d4d4d 49.9px,#fff 56.4px)"></i>
<i style="position:absolute;left:502px;top:0;width:2px;height:64px;background:linear-gradient(#7071b4,#494a9d 23.0px,#232282 46.0px,#6c6c8c 47.0px,#4e4e4e 47.5px,#4e4e4e 49.5px,#fff 56.0px)"></i>
<i style="position:absolute;left:504px;top:0;width:2px;height:64px;background:linear-gradient(#6f70b3,#494a9c 22.8px,#232382 45.5px,#6c6c8c 46.5px,#4e4e4e 47.0px,#4e4e4e 49.0px,#fff 55.5px)"></i>
<i style="position:absolute;left:506px;top:0;width:2px;height:64px;background:linear-gradient(#6e70b2,#494a9c 22.5px,#242381 45.1px,#6c6c8c 46.1px,#4f4f4f 46.6px,#4f4f4f 48.6px,#fff 55.1px)"></i>
<i style="position:absolute;left:508px;top:0;width:2px;height:64px;background:linear-gradient(#6e6fb1,#494a9b 22.3px,#242380 44.6px,#6c6c8c 45.6px,#505050 46.1px,#505050 48.1px,#fff 54.6px)"></i>
<i style="position:absolute;left:510px;top:0;width:2px;height:64px;background:linear-gradient(#6d6eb0,#494a9a 22.1px,#24237f 44.2px,#6c6c8c 45.2px,#505050 45.7px,#505050 47.7px,#fff 54.2px)"></i>
<i style="position:absolute;left:512px;top:0;width:2px;height:64px;background:linear-gradient(#6d6eaf,#48499a 21.8px,#24247f 43.7px,#6c6c8c 44.7px,#515151 45.2px,#515151 47.2px,#fff 53.7px)"></i>
<i style="position:absolute;left:514px;top:0;width:2px;height:64px;background:linear-gradient(#6c6dae,#484999 21.6px,#25247e 43.2px,#6c6c8c 44.2px,#525252 44.7px,#525252 46.7px,#fff 53.2px)"></i>
<i style="position:absolute;left:516px;top:0;width:2px;height:64px;background:linear-gradient(#6c6cad,#484998 21.4px,#25247d 42.8px,#6c6c8c 43.8px,#525252 44.3px,#525252 46.3px,#fff 52.8px)"></i>
<i style="position:absolute;left:518px;top:0;width:2px;height:64px;background:linear-gradient(#6b6cac,#484998 21.2px,#25247c 42.3px,#6c6c8c 43.3px,#535353 43.8px,#535353 45.8px,#fff 52.3px)"></i>
<i style="position:absolute;left:520px;top:0;width:2px;height:64px;background:linear-gradient(#6a6bab,#484997 20.9px,#26247b 41.8px,#6c6c8c 42.8px,#545454 43.3px,#545454 45.3px,#fff 51.8px)"></i>
<i style="position:absolute;left:522px;top:0;width:2px;height:64px;background:linear-gradient(#6a6ba9,#484997 20.7px,#26257b 41.4px,#6c6c8c 42.4px,#555555 42.9px,#555555 44.9px,#fff 51.4px)"></i>
<i style="position:absolute;left:524px;top:0;width:2px;height:64px;background:linear-gradient(#696aa8,#484896 20.5px,#26257a 40.9px,#6c6c8c 41.9px,#555555 42.4px,#555555 44.4px,#fff 50.9px)"></i>
<i style="position:absolute;left:526px;top:0;width:2px;height:64px;background:linear-gradient(#6969a7,#474895 20.2px,#262579 40.5px,#6c6c8c 41.5px,#565656 42.0px,#565656 44.0px,#fff 50.5px)"></i>
<i style="position:absolute;left:528px;top:0;width:2px;height:64px;background:linear-gradient(#6869a6,#474895 20.0px,#272578 40.0px,#6c6c8c 41.0px,#575757 41.5px,#575757 43.5px,#fff 50.0px)"></i>
<i style="position:absolute;left:530px;top:0;width:2px;height:64px;background:linear-gradient(#6768a5,#474894 19.8px,#272678 39.6px,#6c6c8c 40.6px,#575757 41.1px,#575757 43.1px,#fff 49.6px)"></i>
<i style="position:absolute;left:532px;top:0;width:2px;height:64px;background:linear-gradient(#6767a4,#474893 19.6px,#272677 39.1px,#6c6c8c 40.1px,#585858 40.6px,#585858 42.6px,#fff 49.1px)"></i>
<i style="position:absolute;left:534px;top:0;width:2px;height:64px;background:linear-gradient(#6667a3,#474793 19.4px,#282676 38.7px,#6c6c8c 39.7px,#585858 40.2px,#585858 42.2px,#fff 48.7px)"></i>
<i style="position:absolute;left:536px;top:0;width:2px;height:64px;background:linear-gradient(#6666a2,#474792 19.1px,#282676 38.3px,#6c6c8c 39.3px,#595959 39.8px,#595959 41.8px,#fff 48.3px)"></i>
<i style="position:absolute;left:538px;top:0;width:2px;height:64px;background:linear-gradient(#6566a1,#474792 18.9px,#282675 37.9px,#6c6c8c 38.9px,#5a5a5a 39.4px,#5a5a5a 41.4px,#fff 47.9px)"></i>
<i style="position:absolute;left:540px;top:0;width:2px;height:64px;background:linear-gradient(#6565a0,#474791 18.7px,#282774 37.5px,#6c6c8c 38.5px,#5a5a5a 39.0px,#5a5a5a 41.0px,#fff 47.5px)"></i>
<i style="position:absolute;left:542px;top:0;width:2px;height:64px;background:linear-gradient(#64659f,#464791 18.5px,#292774 37.1px,#6c6c8c 38.1px,#5b5b5b 38.6px,#5b5b5b 40.6px,#fff 47.1px)"></i>
<i style="position:absolute;left:544px;top:0;width:2px;height:64px;background:linear-gradient(#64649f,#464790 18.3px,#292773 36.7px,#6c6c8c 37.7px,#5b5b5b 38.2px,#5b5b5b 40.2px,#fff 46.7px)"></i>
<i style="position:absolute;left:546px;top:0;width:2px;height:64px;background:linear-gradient(#63649e,#464790 18.1px,#292773 36.3px,#6c6c8c 37.3px,#5c5c5c 37.8px,#5c5c5c 39.8px,#fff 46.3px)"></i>
<i style="position:absolute;left:548px;top:0;width:2px;height:64px;background:linear-gradient(#63639d,#46468f 18.0px,#292772 35.9px,#6c6c8c 36.9px,#5c5c5c 37.4px,#5c5c5c 39.4px,#fff 45.9px)"></i>
<i style="position:absolute;left:550px;top:0;width:2px;height:64px;background:linear-gradient(#62639c,#46468f 17.8px,#292772 35.6px,#6c6c8c 36.6px,#5c5c5c 37.1px,#5c5c5c 39.1px,#fff 45.6px)"></i>
<i style="position:absolute;left:552px;top:0;width:2px;height:64px;background:linear-gradient(#62629b,#46468e 17.6px,#292871 35.2px,#6c6c8c 36.2px,#5d5d5d 36.7px,#5d5d5d 38.7px,#fff 45.2px)"></i>
<i style="position:absolute;left:554px;top:0;width:2px;height:64px;background:linear-gradient(#62629a,#46468e 17.4px,#2a2871 34.9px,#6c6c8c 35.9px,#5d5d5d 36.4px,#5d5d5d 38.4px,#fff 44.9px)"></i>
<i style="position:absolute;left:556px;top:0;width:2px;height:64px;background:linear-gradient(#61619a,#46468d 17.3px,#2a2871 34.6px,#6c6c8c 35.6px,#5d5d5d 36.1px,#5d5d5d 38.1px,#fff 44.6px)"></i>
<i style="position:absolute;left:558px;top:0;width:2px;height:64px;background:linear-gradient(#616199,#46468d 17.1px,#2a2870 34.3px,#6c6c8c 35.3px,#5e5e5e 35.8px,#5e5e5e 37.8px,#fff 44.3px)"></i>
<i style="position:absolute;left:560px;top:0;width:2px;height:64px;background:linear-gradient(#606198,#46468d 17.0px,#2a2870 34.0px,#6c6c8c 35.0px,#5e5e5e 35.5px,#5e5e5e 37.5px,#fff 44.0px)"></i>
<i style="position:absolute;left:562px;top:0;width:2px;height:64px;background:linear-gradient(#606098,#45468c 16.9px,#2a2870 33.7px,#6c6c8c 34.7px,#5e5e5e 35.2px,#5e5e5e 37.2px,#fff 43.7px)"></i>
<i style="position:absolute;left:564px;top:0;width:2px;height:64px;background:linear-gradient(#606097,#45468c 16.7px,#2a2870 33.5px,#6c6c8c 34.5px,#5e5e5e 35.0px,#5e5e5e 37.0px,#fff 43.5px)"></i>
<i style="position:absolute;left:566px;top:0;width:2px;height:64px;background:linear-gradient(#5f6097,#45458c 16.6px,#2a2870 33.2px,#6c6c8c 34.2px,#5e5e5e 34.7px,#5e5e5e 36.7px,#fff 43.2px)"></i>
<i style="position:absolute;left:568px;top:0;width:2px;height:64px;background:linear-gradient(#5f5f96,#45458b 16.5px,#2a2870 33.0px,#6c6c8c 34.0px,#5e5e5e 34.5px,#5e5e5e 36.5px,#fff 43.0px)"></i>
<i style="position:absolute;left:570px;top:0;width:2px;height:64px;background:linear-gradient(#5f5f96,#45458b 16.5px,#2a2870 33.0px,#6c6c8c 34.0px,#5e5e5e 34.5px,#5e5e5e 36.5px,#fff 43.0px)"></i>
<i style="position:absolute;left:572px;top:0;width:2px;height:64px;background:linear-gradient(#5f5f95,#45458b 16.5px,#2a2870 33.0px,#6c6c8c 34.0px,#5e5e5e 34.5px,#5e5e5e 36.5px,#fff 43.0px)"></i>
<i style="position:absolute;left:574px;top:0;width:2px;height:64px;background:linear-gradient(#5f5f95,#45458b 16.5px,#2a2870 33.0px,#6c6c8c 34.0px,#5e5e5e 34.5px,#5e5e5e 36.5px,#fff 43.0px)"></i>
<i style="position:absolute;left:576px;top:0;width:2px;height:64px;background:linear-gradient(#5e5e95,#45458a 16.5px,#2a2870 33.0px,#6c6c8c 34.0px,#5e5e5e 34.5px,#5e5e5e 36.5px,#fff 43.0px)"></i>
<i style="position:absolute;left:578px;top:0;width:8px;height:64px;background:linear-gradient(#5e5e94,#45458a 16.5px,#2a2870 33.0px,#6c6c8c 34.0px,#5e5e5e 34.5px,#5e5e5e 36.5px,#fff 43.0px)"></i>
<i style="position:absolute;left:586px;top:0;width:8px;height:64px;background:linear-gradient(#5e5e94,#45458a 16.5px,#2a2870 33.0px,#6c6c8c 34.0px,#5e5e5e 34.5px,#5e5e5e 36.5px,#fff 43.0px)"></i>
<i style="position:absolute;left:594px;top:0;width:8px;height:64px;background:linear-gradient(#5e5e94,#45458a 16.5px,#2a2870 33.0px,#6c6c8c 34.0px,#5e5e5e 34.5px,#5e5e5e 36.5px,#fff 43.0px)"></i>
<i style="position:absolute;left:602px;top:0;width:8px;height:64px;background:linear-gradient(#5e5e94,#45458a 16.5px,#2a2870 33.0px,#6c6c8c 34.0px,#5e5e5e 34.5px,#5e5e5e 36.5px,#fff 43.0px)"></i>
<i style="position:absolute;left:610px;top:0;width:8px;height:64px;background:linear-gradient(#5e5e94,#45458a 16.5px,#2a2870 33.0px,#6c6c8c 34.0px,#5e5e5e 34.5px,#5e5e5e 36.5px,#fff 43.0px)"></i>
<i style="position:absolute;left:618px;top:0;width:8px;height:64px;background:linear-gradient(#5e5e94,#45458a 16.5px,#2a2870 33.0px,#6c6c8c 34.0px,#5e5e5e 34.5px,#5e5e5e 36.5px,#fff 43.0px)"></i>
<i style="position:absolute;left:626px;top:0;width:8px;height:64px;background:linear-gradient(#5e5e94,#45458a 16.5px,#2a2870 33.0px,#6c6c8c 34.0px,#5e5e5e 34.5px,#5e5e5e 36.5px,#fff 43.0px)"></i>
<i style="position:absolute;left:634px;top:0;width:8px;height:64px;background:linear-gradient(#5e5e94,#45458a 16.5px,#2a2870 33.0px,#6c6c8c 34.0px,#5e5e5e 34.5px,#5e5e5e 36.5px,#fff 43.0px)"></i>
<i style="position:absolute;left:642px;top:0;width:8px;height:64px;background:linear-gradient(#5e5e94,#45458a 16.5px,#2a2870 33.0px,#6c6c8c 34.0px,#5e5e5e 34.5px,#5e5e5e 36.5px,#fff 43.0px)"></i>
<i style="position:absolute;left:650px;top:0;width:8px;height:64px;background:linear-gradient(#5e5e94,#45458a 16.5px,#2a2870 33.0px,#6c6c8c 34.0px,#5e5e5e 34.5px,#5e5e5e 36.5px,#fff 43.0px)"></i>
<i style="position:absolute;left:658px;top:0;width:8px;height:64px;background:linear-gradient(#5e5e94,#45458a 16.5px,#2a2870 33.0px,#6c6c8c 34.0px,#5e5e5e 34.5px,#5e5e5e 36.5px,#fff 43.0px)"></i>
<i style="position:absolute;left:666px;top:0;width:8px;height:64px;background:linear-gradient(#5e5e94,#45458a 16.5px,#2a2870 33.0px,#6c6c8c 34.0px,#5e5e5e 34.5px,#5e5e5e 36.5px,#fff 43.0px)"></i>
<i style="position:absolute;left:674px;top:0;width:8px;height:64px;background:linear-gradient(#5e5e94,#45458a 16.5px,#2a2870 33.0px,#6c6c8c 34.0px,#5e5e5e 34.5px,#5e5e5e 36.5px,#fff 43.0px)"></i>
<i style="position:absolute;left:682px;top:0;width:8px;height:64px;background:linear-gradient(#5e5e94,#45458a 16.5px,#2a2870 33.0px,#6c6c8c 34.0px,#5e5e5e 34.5px,#5e5e5e 36.5px,#fff 43.0px)"></i>
<i style="position:absolute;left:690px;top:0;width:8px;height:64px;background:linear-gradient(#5e5e94,#45458a 16.5px,#2a2870 33.0px,#6c6c8c 34.0px,#5e5e5e 34.5px,#5e5e5e 36.5px,#fff 43.0px)"></i>
<i style="position:absolute;left:698px;top:0;width:8px;height:64px;background:linear-gradient(#5e5e94,#45458a 16.5px,#2a2870 33.0px,#6c6c8c 34.0px,#5e5e5e 34.5px,#5e5e5e 36.5px,#fff 43.0px)"></i>
<i style="position:absolute;left:706px;top:0;width:8px;height:64px;background:linear-gradient(#5e5e94,#45458a 16.5px,#2a2870 33.0px,#6c6c8c 34.0px,#5e5e5e 34.5px,#5e5e5e 36.5px,#fff 43.0px)"></i>
<i style="position:absolute;left:714px;top:0;width:8px;height:64px;background:linear-gradient(#5e5e94,#45458a 16.5px,#2a2870 33.0px,#6c6c8c 34.0px,#5e5e5e 34.5px,#5e5e5e 36.5px,#fff 43.0px)"></i>
<i style="position:absolute;left:722px;top:0;width:8px;height:64px;background:linear-gradient(#5e5e94,#45458a 16.5px,#2a2870 33.0px,#6c6c8c 34.0px,#5e5e5e 34.5px,#5e5e5e 36.5px,#fff 43.0px)"></i>
<i style="position:absolute;left:730px;top:0;width:8px;height:64px;background:linear-gradient(#5e5e94,#45458a 16.5px,#2a2870 33.0px,#6c6c8c 34.0px,#5e5e5e 34.5px,#5e5e5e 36.5px,#fff 43.0px)"></i>
<i style="position:absolute;left:738px;top:0;width:8px;height:64px;background:linear-gradient(#5e5e94,#45458a 16.5px,#2a2870 33.0px,#6c6c8c 34.0px,#5e5e5e 34.5px,#5e5e5e 36.5px,#fff 43.0px)"></i>
<i style="position:absolute;left:746px;top:0;width:8px;height:64px;background:linear-gradient(#5e5e94,#45458a 16.5px,#2a2870 33.0px,#6c6c8c 34.0px,#5e5e5e 34.5px,#5e5e5e 36.5px,#fff 43.0px)"></i>
<i style="position:absolute;left:754px;top:0;width:8px;height:64px;background:linear-gradient(#5e5e94,#45458a 16.5px,#2a2870 33.0px,#6c6c8c 34.0px,#5e5e5e 34.5px,#5e5e5e 36.5px,#fff 43.0px)"></i>
<i style="position:absolute;left:762px;top:0;width:8px;height:64px;background:linear-gradient(#5e5e94,#45458a 16.5px,#2a2870 33.0px,#6c6c8c 34.0px,#5e5e5e 34.5px,#5e5e5e 36.5px,#fff 43.0px)"></i>
<i style="position:absolute;left:770px;top:0;width:8px;height:64px;background:linear-gradient(#5e5e94,#45458a 16.5px,#2a2870 33.0px,#6c6c8c 34.0px,#5e5e5e 34.5px,#5e5e5e 36.5px,#fff 43.0px)"></i>
<i style="position:absolute;left:778px;top:0;width:8px;height:64px;background:linear-gradient(#5e5e94,#45458a 16.5px,#2a2870 33.0px,#6c6c8c 34.0px,#5e5e5e 34.5px,#5e5e5e 36.5px,#fff 43.0px)"></i>
<i style="position:absolute;left:786px;top:0;width:8px;height:64px;background:linear-gradient(#5e5e94,#45458a 16.5px,#2a2870 33.0px,#6c6c8c 34.0px,#5e5e5e 34.5px,#5e5e5e 36.5px,#fff 43.0px)"></i>
<i style="position:absolute;left:794px;top:0;width:8px;height:64px;background:linear-gradient(#5e5e94,#45458a 16.5px,#2a2870 33.0px,#6c6c8c 34.0px,#5e5e5e 34.5px,#5e5e5e 36.5px,#fff 43.0px)"></i>
<i style="position:absolute;left:802px;top:0;width:8px;height:64px;background:linear-gradient(#5e5e94,#45458a 16.5px,#2a2870 33.0px,#6c6c8c 34.0px,#5e5e5e 34.5px,#5e5e5e 36.5px,#fff 43.0px)"></i>
<i style="position:absolute;left:810px;top:0;width:8px;height:64px;background:linear-gradient(#5e5e94,#45458a 16.5px,#2a2870 33.0px,#6c6c8c 34.0px,#5e5e5e 34.5px,#5e5e5e 36.5px,#fff 43.0px)"></i>
<i style="position:absolute;left:818px;top:0;width:8px;height:64px;background:linear-gradient(#5e5e94,#45458a 16.5px,#2a2870 33.0px,#6c6c8c 34.0px,#5e5e5e 34.5px,#5e5e5e 36.5px,#fff 43.0px)"></i>
<i style="position:absolute;left:826px;top:0;width:8px;height:64px;background:linear-gradient(#5e5e94,#45458a 16.5px,#2a2870 33.0px,#6c6c8c 34.0px,#5e5e5e 34.5px,#5e5e5e 36.5px,#fff 43.0px)"></i>
<i style="position:absolute;left:834px;top:0;width:8px;height:64px;background:linear-gradient(#5e5e94,#45458a 16.5px,#2a2870 33.0px,#6c6c8c 34.0px,#5e5e5e 34.5px,#5e5e5e 36.5px,#fff 43.0px)"></i>
<i style="position:absolute;left:842px;top:0;width:8px;height:64px;background:linear-gradient(#5e5e94,#45458a 16.5px,#2a2870 33.0px,#6c6c8c 34.0px,#5e5e5e 34.5px,#5e5e5e 36.5px,#fff 43.0px)"></i>
<i style="position:absolute;left:850px;top:0;width:8px;height:64px;background:linear-gradient(#5e5e94,#45458a 16.5px,#2a2870 33.0px,#6c6c8c 34.0px,#5e5e5e 34.5px,#5e5e5e 36.5px,#fff 43.0px)"></i>
<i style="position:absolute;left:858px;top:0;width:8px;height:64px;background:linear-gradient(#5e5e94,#45458a 16.5px,#2a2870 33.0px,#6c6c8c 34.0px,#5e5e5e 34.5px,#5e5e5e 36.5px,#fff 43.0px)"></i>
<i style="position:absolute;left:866px;top:0;width:8px;height:64px;background:linear-gradient(#5e5e94,#45458a 16.5px,#2a2870 33.0px,#6c6c8c 34.0px,#5e5e5e 34.5px,#5e5e5e 36.5px,#fff 43.0px)"></i>
<i style="position:absolute;left:874px;top:0;width:8px;height:64px;background:linear-gradient(#5e5e94,#45458a 16.5px,#2a2870 33.0px,#6c6c8c 34.0px,#5e5e5e 34.5px,#5e5e5e 36.5px,#fff 43.0px)"></i>
<i style="position:absolute;left:882px;top:0;width:8px;height:64px;background:linear-gradient(#5e5e94,#45458a 16.5px,#2a2870 33.0px,#6c6c8c 34.0px,#5e5e5e 34.5px,#5e5e5e 36.5px,#fff 43.0px)"></i>
<i style="position:absolute;left:890px;top:0;width:8px;height:64px;background:linear-gradient(#5e5e94,#45458a 16.5px,#2a2870 33.0px,#6c6c8c 34.0px,#5e5e5e 34.5px,#5e5e5e 36.5px,#fff 43.0px)"></i>
<i style="position:absolute;left:898px;top:0;width:8px;height:64px;background:linear-gradient(#5e5e94,#45458a 16.5px,#2a2870 33.0px,#6c6c8c 34.0px,#5e5e5e 34.5px,#5e5e5e 36.5px,#fff 43.0px)"></i>
<i style="position:absolute;left:906px;top:0;width:8px;height:64px;background:linear-gradient(#5e5e94,#45458a 16.5px,#2a2870 33.0px,#6c6c8c 34.0px,#5e5e5e 34.5px,#5e5e5e 36.5px,#fff 43.0px)"></i>
<i style="position:absolute;left:914px;top:0;width:8px;height:64px;background:linear-gradient(#5e5e94,#45458a 16.5px,#2a2870 33.0px,#6c6c8c 34.0px,#5e5e5e 34.5px,#5e5e5e 36.5px,#fff 43.0px)"></i>
<i style="position:absolute;left:922px;top:0;width:8px;height:64px;background:linear-gradient(#5e5e94,#45458a 16.5px,#2a2870 33.0px,#6c6c8c 34.0px,#5e5e5e 34.5px,#5e5e5e 36.5px,#fff 43.0px)"></i>
<i style="position:absolute;left:930px;top:0;width:8px;height:64px;background:linear-gradient(#5e5e94,#45458a 16.5px,#2a2870 33.0px,#6c6c8c 34.0px,#5e5e5e 34.5px,#5e5e5e 36.5px,#fff 43.0px)"></i>
<i style="position:absolute;left:938px;top:0;width:8px;height:64px;background:linear-gradient(#5e5e94,#45458a 16.5px,#2a2870 33.0px,#6c6c8c 34.0px,#5e5e5e 34.5px,#5e5e5e 36.5px,#fff 43.0px)"></i>
<i style="position:absolute;left:946px;top:0;width:8px;height:64px;background:linear-gradient(#5e5e94,#45458a 16.5px,#2a2870 33.0px,#6c6c8c 34.0px,#5e5e5e 34.5px,#5e5e5e 36.5px,#fff 43.0px)"></i>
<i style="position:absolute;left:954px;top:0;width:8px;height:64px;background:linear-gradient(#5e5e94,#45458a 16.5px,#2a2870 33.0px,#6c6c8c 34.0px,#5e5e5e 34.5px,#5e5e5e 36.5px,#fff 43.0px)"></i>
<i style="position:absolute;left:962px;top:0;width:8px;height:64px;background:linear-gradient(#5e5e94,#45458a 16.5px,#2a2870 33.0px,#6c6c8c 34.0px,#5e5e5e 34.5px,#5e5e5e 36.5px,#fff 43.0px)"></i>
<i style="position:absolute;left:970px;top:0;width:8px;height:64px;background:linear-gradient(#5e5e94,#45458a 16.5px,#2a2870 33.0px,#6c6c8c 34.0px,#5e5e5e 34.5px,#5e5e5e 36.5px,#fff 43.0px)"></i>
<i style="position:absolute;left:978px;top:0;width:8px;height:64px;background:linear-gradient(#5e5e94,#45458a 16.5px,#2a2870 33.0px,#6c6c8c 34.0px,#5e5e5e 34.5px,#5e5e5e 36.5px,#fff 43.0px)"></i>
<i style="position:absolute;left:986px;top:0;width:8px;height:64px;background:linear-gradient(#5e5e94,#45458a 16.5px,#2a2870 33.0px,#6c6c8c 34.0px,#5e5e5e 34.5px,#5e5e5e 36.5px,#fff 43.0px)"></i>
<i style="position:absolute;left:994px;top:0;width:1px;height:64px;background:linear-gradient(#5e5e94,#45458a 16.5px,#2a2870 33.0px,#6c6c8c 34.0px,#5e5e5e 34.5px,#5e5e5e 36.5px,#fff 43.0px)"></i>
</div>
<div class="t" style="left:816px;top:92px;font-size:12px;color:#fff;font-style:italic">Operator: <b style="margin-left:0.6px;letter-spacing:0.1px">MARIUS M</b></div>
<div class="a" style="left:142px;top:143px;width:54px;height:27px;background:#fff"></div>
<div class="sep" style="left:81px;top:146px;height:24px"></div>
<div class="sep" style="left:196px;top:144px;height:26px"></div>
<div class="sep" style="left:299px;top:146px;height:24px"></div>
<div class="t" style="left:10px;top:153px;font-size:12px;letter-spacing:0.2px">Configurare</div>
<div class="t" style="left:90px;top:153px;font-size:12px;letter-spacing:0.3px">Proiecte</div>
<div class="t" style="left:150px;top:151px;font-size:12px;letter-spacing:0.15px">Lucrări</div>
<div class="t" style="left:203px;top:153px;font-size:12px;letter-spacing:0.12px">Analiza lucrărilor</div>
<div class="st" style="left:9px;top:174px;width:341px;height:24px"><div class="t" style="left:0;width:100%;top:7px">Listă lucrări</div></div>
<div class="st" style="left:351px;top:172px;width:313px;height:27px"><div class="t" style="left:0;width:100%;top:7px">Oferte</div></div>
<div class="a" style="left:664px;top:172px;width:2px;height:26px;background:#696969;border-left:1px solid #a0a0a0"></div>
<div class="st" style="left:666px;top:174px;width:329px;height:24px"><div class="t" style="left:0;width:100%;top:8px">Contracte</div></div>
<div class="sep" style="left:995px;top:170px;height:611px"></div>

<div class="t " style="left:19px;top:216px;font-size:12px;">Ofertă pe lucrarea&nbsp;&nbsp;<b style="letter-spacing:-0.25px">3-TEST C//C2</b></div>
<div class="a" style="left:18px;top:238px;width:744px;height:314px;background:#fff;border:1px solid #a9adb5;box-sizing:border-box"></div>
<div class="a" style="left:468px;top:239px;width:275px;height:18px;background:#f0f0f0;"></div>
<div class="a" style="left:352px;top:239px;width:1px;height:18px;background:#e3e3e3;"></div>
<div class="a" style="left:744px;top:239px;width:16px;height:296px;background:#f0f0f0;"></div>
<div class="a" style="left:25px;top:535px;width:718px;height:15px;background:#f0f0f0;"></div>
<div class="a" style="left:751px;top:256px;width:2px;height:264px;background:#7f7f7f;"></div>
<div class="a" style="left:20px;top:534px;width:4px;height:16px;background:#000;"></div>
<div class="a" style="left:19px;top:239px;width:9px;height:18px;background:#f0f0f0;border:1px solid #fff;box-sizing:border-box"></div>
<div class="a" style="left:19px;top:258px;width:9px;height:17px;background:#f0f0f0;border:1px solid #fff;box-sizing:border-box"></div>
<div class="a" style="left:19px;top:276px;width:9px;height:17px;background:#f0f0f0;border:1px solid #fff;box-sizing:border-box"></div>
<div class="a" style="left:19px;top:294px;width:9px;height:17px;background:#f0f0f0;border:1px solid #fff;box-sizing:border-box"></div>
<div class="a" style="left:19px;top:312px;width:9px;height:17px;background:#f0f0f0;border:1px solid #fff;box-sizing:border-box"></div>
<div class="a" style="left:19px;top:330px;width:9px;height:17px;background:#f0f0f0;border:1px solid #fff;box-sizing:border-box"></div>
<div class="a" style="left:19px;top:348px;width:9px;height:17px;background:#f0f0f0;border:1px solid #fff;box-sizing:border-box"></div>
<div class="a" style="left:19px;top:366px;width:9px;height:17px;background:#f0f0f0;border:1px solid #fff;box-sizing:border-box"></div>
<div class="a" style="left:19px;top:384px;width:9px;height:17px;background:#f0f0f0;border:1px solid #fff;box-sizing:border-box"></div>
<div class="a" style="left:19px;top:402px;width:9px;height:17px;background:#f0f0f0;border:1px solid #fff;box-sizing:border-box"></div>
<div class="a" style="left:19px;top:420px;width:9px;height:17px;background:#f0f0f0;border:1px solid #fff;box-sizing:border-box"></div>
<div class="a" style="left:19px;top:438px;width:9px;height:17px;background:#f0f0f0;border:1px solid #fff;box-sizing:border-box"></div>
<div class="a" style="left:19px;top:456px;width:9px;height:17px;background:#f0f0f0;border:1px solid #fff;box-sizing:border-box"></div>
<div class="a" style="left:19px;top:474px;width:9px;height:17px;background:#f0f0f0;border:1px solid #fff;box-sizing:border-box"></div>
<div class="a" style="left:19px;top:492px;width:9px;height:17px;background:#f0f0f0;border:1px solid #fff;box-sizing:border-box"></div>
<div class="a" style="left:19px;top:510px;width:9px;height:17px;background:#f0f0f0;border:1px solid #fff;box-sizing:border-box"></div>
<div class="a" style="left:19px;top:528px;width:9px;height:7px;background:#f0f0f0;border:1px solid #fff;border-bottom:0;box-sizing:border-box"></div>
<div class="a" style="left:19px;top:257px;width:724px;height:1px;background:#000;"></div>
<div class="a" style="left:19px;top:275px;width:724px;height:1px;background:#000;"></div>
<div class="a" style="left:19px;top:293px;width:724px;height:1px;background:#000;"></div>
<div class="a" style="left:19px;top:311px;width:724px;height:1px;background:#000;"></div>
<div class="a" style="left:19px;top:329px;width:724px;height:1px;background:#000;"></div>
<div class="a" style="left:19px;top:347px;width:724px;height:1px;background:#000;"></div>
<div class="a" style="left:19px;top:365px;width:724px;height:1px;background:#000;"></div>
<div class="a" style="left:19px;top:383px;width:724px;height:1px;background:#000;"></div>
<div class="a" style="left:19px;top:401px;width:724px;height:1px;background:#000;"></div>
<div class="a" style="left:19px;top:419px;width:724px;height:1px;background:#000;"></div>
<div class="a" style="left:19px;top:437px;width:724px;height:1px;background:#000;"></div>
<div class="a" style="left:19px;top:455px;width:724px;height:1px;background:#000;"></div>
<div class="a" style="left:19px;top:473px;width:724px;height:1px;background:#000;"></div>
<div class="a" style="left:19px;top:491px;width:724px;height:1px;background:#000;"></div>
<div class="a" style="left:19px;top:509px;width:724px;height:1px;background:#000;"></div>
<div class="a" style="left:19px;top:527px;width:724px;height:1px;background:#000;"></div>
<div class="a" style="left:28px;top:239px;width:1px;height:295px;background:#000;"></div>
<div class="a" style="left:352px;top:257px;width:1px;height:277px;background:#000;"></div>
<div class="a" style="left:467px;top:257px;width:1px;height:277px;background:#000;"></div>
<div class="a" style="left:29px;top:347px;width:714px;height:19px;background:#0a78d8;"></div>
<div class="a" style="left:30px;top:349px;width:321px;height:15px;background:#fff;"></div>
<div class="a" style="left:352px;top:348px;width:390px;height:17px;background:#003f7f;"></div>
<div class="a" style="left:352px;top:348px;width:1px;height:17px;background:#000;"></div>
<div class="a" style="left:467px;top:348px;width:1px;height:17px;background:#000;"></div>
<svg class="a" style="left:23px;top:355px" width="6" height="9" viewBox="0 0 6 9"><path d="M0 0.5 L5 4 L0 7.5Z" fill="#000"/></svg>
<div class="t" style="left:-9px;top:242px;width:400px;text-align:center;font-size:13px;transform:scaleX(0.74);transform-origin:50% 0;">Capitol deviz</div>
<div class="t" style="left:210px;top:242px;width:400px;text-align:center;font-size:13px;transform:scaleX(0.74);transform-origin:50% 0;">Suma (RON)</div>
<div class="t gs" style="left:31px;top:260px;font-size:13px;transform:scaleX(0.78);transform-origin:0 0;">CHELTUIELI MATERIALE</div>
<div class="t gs" style="left:165px;top:259px;width:300px;text-align:right;font-size:13.5px;transform:scaleX(0.675);transform-origin:100% 0;">10 000.00</div>
<div class="t gs" style="left:31px;top:278px;font-size:13px;transform:scaleX(0.78);transform-origin:0 0;">CHELTUIELI MANOPERA</div>
<div class="t gs" style="left:165px;top:277px;width:300px;text-align:right;font-size:13.5px;transform:scaleX(0.675);transform-origin:100% 0;">200 000.00</div>
<div class="t gs" style="left:31px;top:296px;font-size:13px;transform:scaleX(0.78);transform-origin:0 0;">CHELTUIELI UTILAJE</div>
<div class="t gs" style="left:165px;top:295px;width:300px;text-align:right;font-size:13.5px;transform:scaleX(0.675);transform-origin:100% 0;">15 000.00</div>
<div class="t gs" style="left:31px;top:314px;font-size:13px;transform:scaleX(0.78);transform-origin:0 0;">CHELTUIELI TERTI</div>
<div class="t gs" style="left:165px;top:313px;width:300px;text-align:right;font-size:13.5px;transform:scaleX(0.675);transform-origin:100% 0;">220 000.00</div>
<div class="t gs" style="left:31px;top:332px;font-size:13px;transform:scaleX(0.78);transform-origin:0 0;">CHELTUIELI INDIRECTE</div>
<div class="t gs" style="left:165px;top:331px;width:300px;text-align:right;font-size:13.5px;transform:scaleX(0.675);transform-origin:100% 0;">17 000.00</div>
<div class="t gs" style="left:31px;top:350px;font-size:13px;transform:scaleX(0.78);transform-origin:0 0;">PROFIT</div>
<div class="t gs" style="left:165px;top:349px;width:300px;text-align:right;font-size:13.5px;transform:scaleX(0.675);transform-origin:100% 0;color:#fff;">100 000.00</div>
<div class="a" style="left:774px;top:239px;width:216px;height:48px;background:transparent;border:1px solid #646464;box-sizing:border-box"></div>
<div class="t " style="left:782px;top:245px;font-size:12px;">Data ofertă</div>
<div class="a" style="left:803px;top:261px;width:184px;height:23px;background:#f0f0f0;border:1px solid #a0a0a0;box-shadow:inset 1px 1px 0 #fff,inset -1px -1px 0 #fff;box-sizing:border-box"></div>
<div class="t " style="left:808px;top:267px;font-size:12px;letter-spacing:0.3px">01/01/2026</div>
<div class="a" style="left:774px;top:504px;width:216px;height:48px;background:transparent;border:1px solid #646464;box-sizing:border-box"></div>
<div class="t " style="left:782px;top:510px;font-size:12px;">Total</div>
<div class="a" style="left:803px;top:526px;width:184px;height:23px;background:#f0f0f0;border:1px solid #a0a0a0;box-shadow:inset 1px 1px 0 #fff,inset -1px -1px 0 #fff;box-sizing:border-box"></div>
<div class="t" style="left:680px;top:532px;width:301px;text-align:right;font-size:12px;letter-spacing:0.15px">562 000.00</div>
<div class="a" style="left:774px;top:727px;width:216px;height:48px;background:transparent;border:1px solid #646464;box-sizing:border-box"></div>
<div class="t " style="left:782px;top:733px;font-size:12px;">Total pe lucrare</div>
<div class="a" style="left:803px;top:749px;width:184px;height:23px;background:#f0f0f0;border:1px solid #a0a0a0;box-shadow:inset 1px 1px 0 #fff,inset -1px -1px 0 #fff;box-sizing:border-box"></div>
<div class="t" style="left:680px;top:755px;width:301px;text-align:right;font-size:12px;letter-spacing:0.15px">562 000.00</div>
<svg class="a" style="left:896px;top:203px" width="90" height="25" viewBox="896 203 90 25">
<defs>
<linearGradient id="rb1" x1="0" y1="0" x2="1" y2="1"><stop offset="0" stop-color="#b8b8f8"/><stop offset=".25" stop-color="#6a6ad8"/><stop offset=".6" stop-color="#1a1a90"/><stop offset="1" stop-color="#000"/></linearGradient>
</defs>
<g id="btn">
<rect x="898" y="205" width="24" height="21" rx="2.5" fill="#000"/>
<path d="M898 223 L898 207.5 Q898 205 900.5 205 L919 205 L916 208 L901 208 L901 223Z" fill="#6c6cd6"/>
<path d="M898 207 Q898 205 900 205 L902 205 L899 208Z" fill="#c8c8f8" opacity=".7"/>
<rect x="901" y="208" width="16" height="14" fill="#000088"/>
</g>
<path d="M928 223 L928 207.5 Q928 205 930.5 205 L949 205 L946 208 L931 208 L931 223Z" fill="#6c6cd6"/>
<rect x="928" y="205" width="24" height="21" rx="2.5" fill="#000" style="mix-blend-mode:normal" opacity="0"/>
<path d="M952 207.5 L952 223.5 Q952 226 949.5 226 L930.5 226 Q928 226 928 223.5 L931 223 L931 222 L947 222 L947 208 L952 207.5Z" fill="#000"/>
<path d="M950 205.5 Q952 205.5 952 207.5 L947 208 L949 205Z" fill="#000"/>
<rect x="931" y="208" width="16" height="14" fill="#0000c8"/>
<rect x="932" y="209" width="2" height="5" fill="#2ab0a0"/>
<path d="M934 213 L946 213 M934 219 L943 219" stroke="#fff" stroke-width="1.6"/>
<path d="M935 210 L935 213 M938 210 L938 213 M941 210 L941 213 M935 216 L935 219 M938 216 L938 219 M941 216 L941 219" stroke="#f0f0c0" stroke-width="1"/>
<rect x="933.5" y="215.5" width="10" height="4" fill="none" stroke="#fff" stroke-width="1"/>
<path d="M941 222 L947 212" stroke="#e8d040" stroke-width="2"/>
<circle cx="946.5" cy="212" r="1" fill="#d02020"/>
<rect x="931" y="220" width="16" height="2" fill="#1050c0"/>
<!-- delete -->
<path d="M958 223 L958 207.5 Q958 205 960.5 205 L979 205 L976 208 L961 208 L961 223Z" fill="#6c6cd6"/>
<path d="M982 207.5 L982 223.5 Q982 226 979.5 226 L960.5 226 Q958 226 958 223.5 L961 223 L961 222 L977 222 L977 208 L982 207.5Z" fill="#000"/>
<path d="M980 205.5 Q982 205.5 982 207.5 L977 208 L979 205Z" fill="#000"/>
<rect x="961" y="208" width="16" height="14" fill="#000088"/>
<path d="M964 209.5 L976.5 221 M976 209 L963.5 220.5" stroke="#f00000" stroke-width="2.4" stroke-linecap="round"/>
<!-- new: yellow doc -->
<path d="M905 210 L911.5 210 L915 213.5 L915 221 L905 221Z" fill="#ffff00"/>
<path d="M912.5 209.5 L915.5 209.5 L915.5 212.5Z" fill="#b0b0b0"/>
</svg>

<div class="t " style="left:20px;top:566px;font-size:12px;">Total ofertă pe lucrarea&nbsp;&nbsp;<b style="letter-spacing:-0.4px">3-TEST C</b></div>
<div class="a" style="left:19px;top:586px;width:744px;height:189px;background:#fff;border:1px solid #a9adb5;box-sizing:border-box"></div>
<div class="a" style="left:442px;top:587px;width:302px;height:18px;background:#f0f0f0;"></div>
<div class="a" style="left:326px;top:587px;width:1px;height:18px;background:#e3e3e3;"></div>
<div class="a" style="left:745px;top:587px;width:16px;height:171px;background:#f0f0f0;"></div>
<div class="a" style="left:26px;top:758px;width:718px;height:15px;background:#f0f0f0;"></div>
<div class="a" style="left:21px;top:757px;width:4px;height:16px;background:#000;"></div>
<div class="a" style="left:20px;top:587px;width:9px;height:18px;background:#f0f0f0;border:1px solid #fff;box-sizing:border-box"></div>
<div class="a" style="left:20px;top:606px;width:9px;height:17px;background:#f0f0f0;border:1px solid #fff;box-sizing:border-box"></div>
<div class="a" style="left:20px;top:624px;width:9px;height:17px;background:#f0f0f0;border:1px solid #fff;box-sizing:border-box"></div>
<div class="a" style="left:20px;top:642px;width:9px;height:17px;background:#f0f0f0;border:1px solid #fff;box-sizing:border-box"></div>
<div class="a" style="left:20px;top:660px;width:9px;height:17px;background:#f0f0f0;border:1px solid #fff;box-sizing:border-box"></div>
<div class="a" style="left:20px;top:678px;width:9px;height:17px;background:#f0f0f0;border:1px solid #fff;box-sizing:border-box"></div>
<div class="a" style="left:20px;top:696px;width:9px;height:17px;background:#f0f0f0;border:1px solid #fff;box-sizing:border-box"></div>
<div class="a" style="left:20px;top:714px;width:9px;height:17px;background:#f0f0f0;border:1px solid #fff;box-sizing:border-box"></div>
<div class="a" style="left:20px;top:732px;width:9px;height:17px;background:#f0f0f0;border:1px solid #fff;box-sizing:border-box"></div>
<div class="a" style="left:20px;top:750px;width:9px;height:8px;background:#f0f0f0;border:1px solid #fff;border-bottom:0;box-sizing:border-box"></div>
<div class="a" style="left:20px;top:605px;width:724px;height:1px;background:#000;"></div>
<div class="a" style="left:20px;top:623px;width:724px;height:1px;background:#000;"></div>
<div class="a" style="left:20px;top:641px;width:724px;height:1px;background:#000;"></div>
<div class="a" style="left:20px;top:659px;width:724px;height:1px;background:#000;"></div>
<div class="a" style="left:20px;top:677px;width:724px;height:1px;background:#000;"></div>
<div class="a" style="left:20px;top:695px;width:724px;height:1px;background:#000;"></div>
<div class="a" style="left:20px;top:713px;width:724px;height:1px;background:#000;"></div>
<div class="a" style="left:20px;top:731px;width:724px;height:1px;background:#000;"></div>
<div class="a" style="left:20px;top:749px;width:724px;height:1px;background:#000;"></div>
<div class="a" style="left:29px;top:587px;width:1px;height:170px;background:#000;"></div>
<div class="a" style="left:326px;top:605px;width:1px;height:152px;background:#000;"></div>
<div class="a" style="left:441px;top:605px;width:1px;height:152px;background:#000;"></div>
<div class="t" style="left:-22px;top:590px;width:400px;text-align:center;font-size:13px;transform:scaleX(0.74);transform-origin:50% 0;">Capitol deviz</div>
<div class="t" style="left:184px;top:590px;width:400px;text-align:center;font-size:13px;transform:scaleX(0.74);transform-origin:50% 0;">Suma (RON)</div>
<div class="t gs" style="left:32px;top:608px;font-size:13px;transform:scaleX(0.78);transform-origin:0 0;">CHELTUIELI MATERIALE</div>
<div class="t gs" style="left:139px;top:607px;width:300px;text-align:right;font-size:13.5px;transform:scaleX(0.675);transform-origin:100% 0;">10 000.00</div>
<div class="t gs" style="left:32px;top:626px;font-size:13px;transform:scaleX(0.78);transform-origin:0 0;">CHELTUIELI MANOPERA</div>
<div class="t gs" style="left:139px;top:625px;width:300px;text-align:right;font-size:13.5px;transform:scaleX(0.675);transform-origin:100% 0;">200 000.00</div>
<div class="t gs" style="left:32px;top:644px;font-size:13px;transform:scaleX(0.78);transform-origin:0 0;">CHELTUIELI UTILAJE</div>
<div class="t gs" style="left:139px;top:643px;width:300px;text-align:right;font-size:13.5px;transform:scaleX(0.675);transform-origin:100% 0;">15 000.00</div>
<div class="t gs" style="left:32px;top:662px;font-size:13px;transform:scaleX(0.78);transform-origin:0 0;">CHELTUIELI TERTI</div>
<div class="t gs" style="left:139px;top:661px;width:300px;text-align:right;font-size:13.5px;transform:scaleX(0.675);transform-origin:100% 0;">220 000.00</div>
<div class="t gs" style="left:32px;top:680px;font-size:13px;transform:scaleX(0.78);transform-origin:0 0;">CHELTUIELI INDIRECTE</div>
<div class="t gs" style="left:139px;top:679px;width:300px;text-align:right;font-size:13.5px;transform:scaleX(0.675);transform-origin:100% 0;">17 000.00</div>
<div class="t gs" style="left:32px;top:698px;font-size:13px;transform:scaleX(0.78);transform-origin:0 0;">PROFIT</div>
<div class="t gs" style="left:139px;top:697px;width:300px;text-align:right;font-size:13.5px;transform:scaleX(0.675);transform-origin:100% 0;">100 000.00</div>
</body></html>
